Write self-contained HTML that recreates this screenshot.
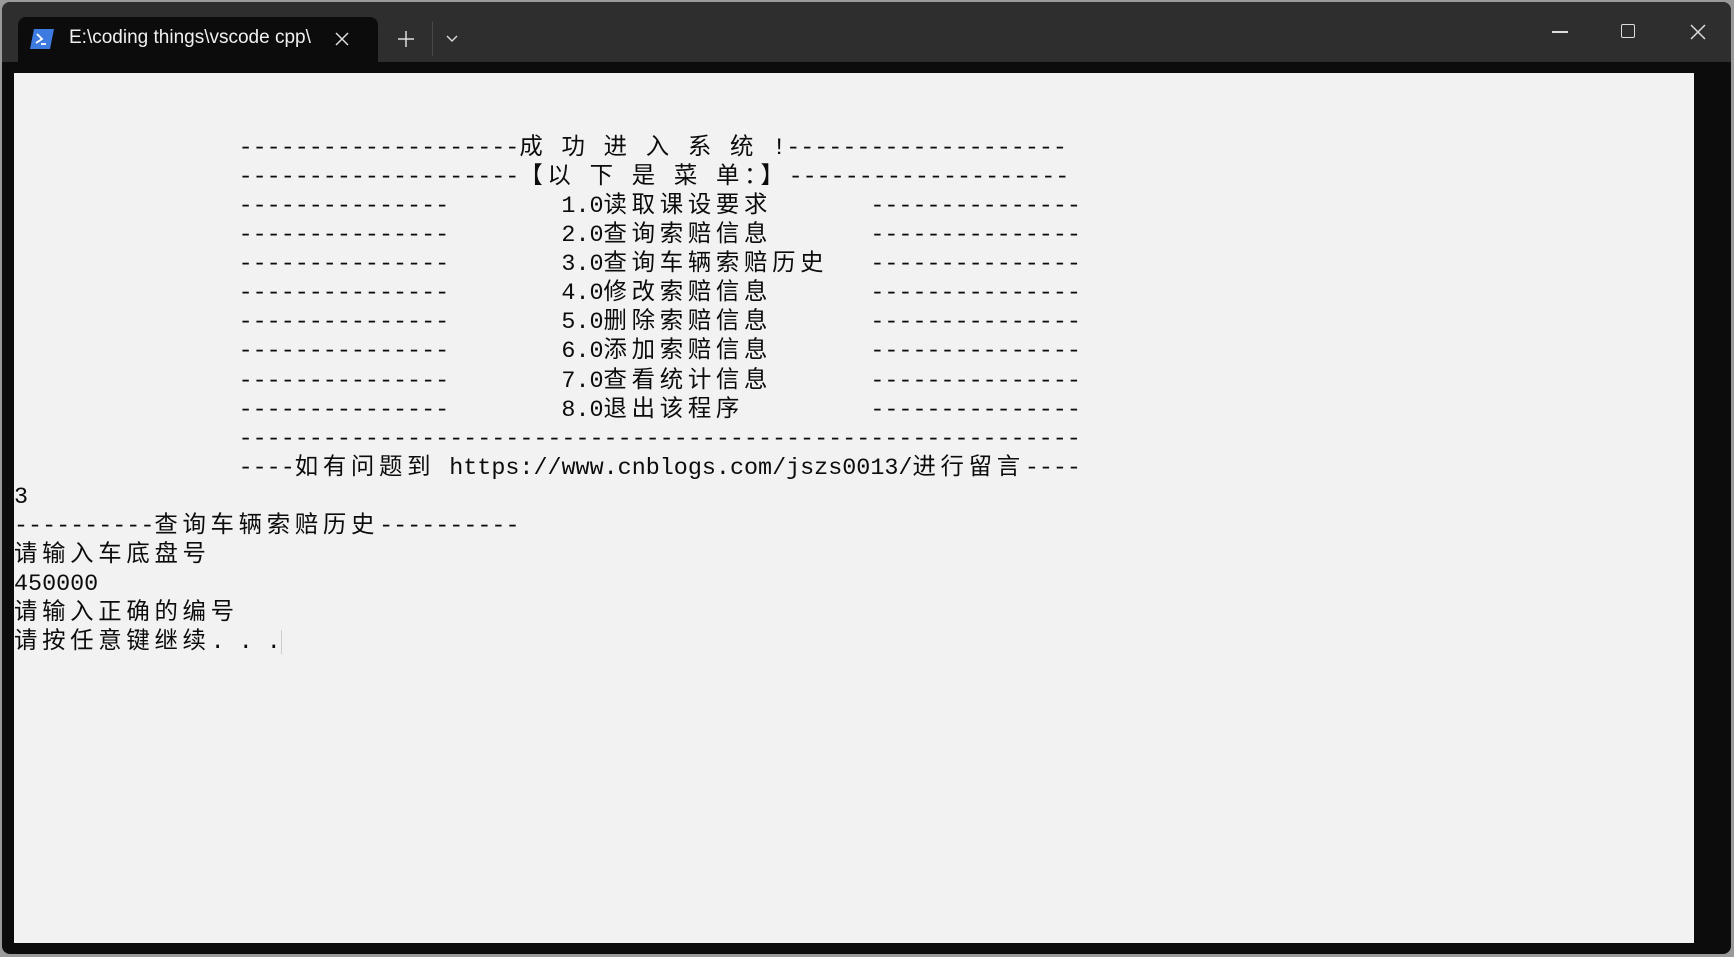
<!DOCTYPE html>
<html><head><meta charset="utf-8"><style>
html,body{margin:0;padding:0;width:1734px;height:957px;overflow:hidden;background:#9a9a9a;}
.win{position:absolute;left:2px;top:2px;width:1729px;height:952px;background:#0c0c0c;border-radius:8px;overflow:hidden;}
.bar{position:absolute;left:0;top:0;width:100%;height:60px;background:#2e2e2e;}
.tab{position:absolute;left:16px;top:15px;width:360px;height:60px;background:#0c0c0c;border-radius:8px 8px 0 0;}
.tabt{position:absolute;left:67px;top:25px;color:#f0f0f0;font:19px "Liberation Sans",sans-serif;}
.term{position:absolute;left:12px;top:71px;width:1680px;height:870px;background:#f2f2f2;}
.t{position:absolute;left:0;top:62px;font-family:"Liberation Mono","Noto Sans CJK SC",monospace;font-size:23.4px;color:#0c0c0c;}
.t div{height:29.07px;line-height:29.07px;white-space:pre;overflow:visible;}
.c{font-family:"Noto Sans CJK SC",sans-serif;letter-spacing:4.7px;line-height:0;}
</style></head><body>
<div class="win">
<div class="bar"></div>
<div class="tab"></div>
<svg style="position:absolute;left:28px;top:27px" width="24" height="20" viewBox="0 0 24 20"><path d="M4 0H24L20 20H0Z" fill="#3d7be0"/><path d="M7 5L12 10L6 14M11 15H16" stroke="#fff" stroke-width="1.8" fill="none"/></svg>
<div class="tabt">E:\coding things\vscode cpp\</div>
<svg style="position:absolute;left:333px;top:30px" width="14" height="14"><path d="M1 1L13 13M13 1L1 13" stroke="#ddd" stroke-width="1.5"/></svg>
<svg style="position:absolute;left:396px;top:29px" width="16" height="16"><path d="M8 0V16M0 8H16" stroke="#ddd" stroke-width="1.5"/></svg>
<div style="position:absolute;left:430px;top:20px;width:1px;height:34px;background:#4a4a4a"></div>
<svg style="position:absolute;left:444px;top:33px" width="12" height="8"><path d="M1 1L6 6L11 1" stroke="#ddd" stroke-width="1.4" fill="none"/></svg>
<div style="position:absolute;left:1550px;top:29px;width:16px;height:1.5px;background:#ddd"></div>
<div style="position:absolute;left:1619px;top:22px;width:12px;height:12px;border:1.5px solid #ddd;border-radius:2px"></div>
<svg style="position:absolute;left:1688px;top:22px" width="16" height="16"><path d="M1 1L15 15M15 1L1 15" stroke="#ddd" stroke-width="1.5"/></svg>
<div class="term"><div class="t">
<div>                --------------------<span class="c">成</span> <span class="c">功</span> <span class="c">进</span> <span class="c">入</span> <span class="c">系</span> <span class="c">统</span> !--------------------</div>
<div>                --------------------<span class="c">【以</span> <span class="c">下</span> <span class="c">是</span> <span class="c">菜</span> <span class="c">单：】</span>--------------------</div>
<div>                ---------------        1.0<span class="c">读取课设要求</span>       ---------------</div>
<div>                ---------------        2.0<span class="c">查询索赔信息</span>       ---------------</div>
<div>                ---------------        3.0<span class="c">查询车辆索赔历史</span>   ---------------</div>
<div>                ---------------        4.0<span class="c">修改索赔信息</span>       ---------------</div>
<div>                ---------------        5.0<span class="c">删除索赔信息</span>       ---------------</div>
<div>                ---------------        6.0<span class="c">添加索赔信息</span>       ---------------</div>
<div>                ---------------        7.0<span class="c">查看统计信息</span>       ---------------</div>
<div>                ---------------        8.0<span class="c">退出该程序</span>         ---------------</div>
<div>                ------------------------------------------------------------</div>
<div>                ----<span class="c">如有问题到</span> https://www.cnblogs.com/jszs0013/<span class="c">进行留言</span>----</div>
<div>3</div>
<div>----------<span class="c">查询车辆索赔历史</span>----------</div>
<div><span class="c">请输入车底盘号</span></div>
<div>450000</div>
<div><span class="c">请输入正确的编号</span></div>
<div><span class="c">请按任意键继续</span>. . .<span style="display:inline-block;width:1px;height:24px;background:#ccc;vertical-align:middle"></span></div>
</div></div>
</div>
</body></html>
